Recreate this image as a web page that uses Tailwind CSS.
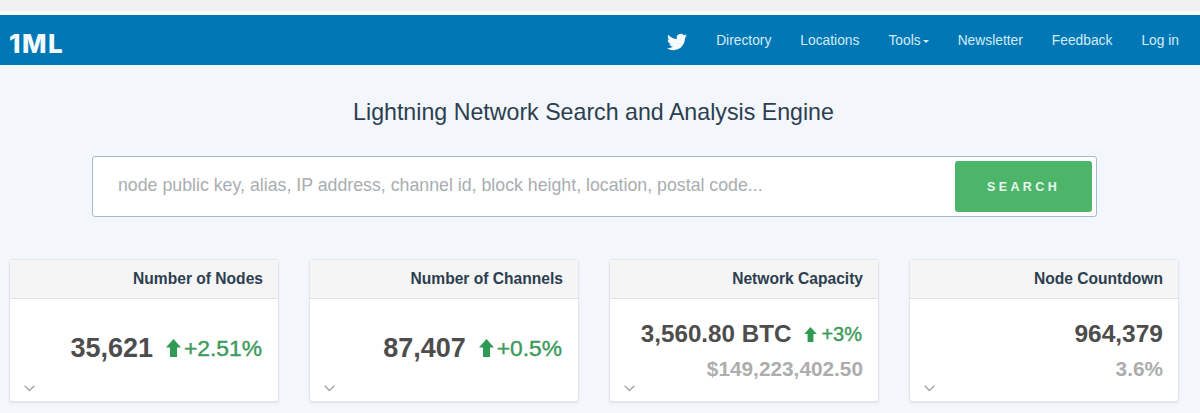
<!DOCTYPE html>
<html lang="en">
  <head>
    <meta charset="UTF-8" />
    <title>1ML - Lightning Network Search and Analysis Engine</title>
    <script src="https://cdn.jsdelivr.net/npm/@tailwindcss/browser@4"></script>
  </head>
  <body class="bg-[#f3f6fa] font-['Liberation_Sans',sans-serif] h-[413px] overflow-hidden">
    <div class="h-[11px] bg-[#f0f1f0]"></div>
    <div class="h-[4px] bg-white"></div>
    <!-- Navbar -->
    <nav class="h-[50px] bg-[#0077b5] flex items-center pl-[9px] pr-[21px] text-[#d4ecf7] text-[13.8px]">
      <span class="mt-[7px] font-['Inter',sans-serif] font-extrabold text-[26px] leading-none text-[#f2fbfe] tracking-[1.5px]">1ML</span>
      <div class="ml-auto pt-[2px] flex items-center">
        <svg class="w-[20px] h-[20px] mt-[1px] mr-[29px]" viewBox="0 0 24 24" fill="#f4fbfe"><path d="M23.95 4.57a10 10 0 0 1-2.82.77 4.96 4.96 0 0 0 2.16-2.72c-.95.55-2 .96-3.12 1.19a4.92 4.92 0 0 0-8.38 4.48C7.69 8.1 4.07 6.13 1.64 3.16a4.82 4.82 0 0 0-.67 2.48c0 1.71.87 3.21 2.19 4.1a4.9 4.9 0 0 1-2.23-.62v.06a4.92 4.92 0 0 0 3.95 4.83 5 5 0 0 1-2.21.08 4.94 4.94 0 0 0 4.6 3.42A9.87 9.87 0 0 1 0 19.54a14 14 0 0 0 7.56 2.21c9.05 0 14-7.5 14-13.98 0-.21 0-.42-.02-.63a9.94 9.94 0 0 0 2.41-2.57z"/></svg>
        <a class="mr-[29px]">Directory</a>
        <a class="mr-[29px]">Locations</a>
        <a class="mr-[29px] flex items-center">Tools<span class="ml-[2px] w-0 h-0 border-x-[3.5px] border-x-transparent border-t-[3.5px] border-t-[#d4ecf7]"></span></a>
        <a class="mr-[29px]">Newsletter</a>
        <a class="mr-[29px]">Feedback</a>
        <a>Log in</a>
      </div>
    </nav>

    <h1 class="mt-[33px] pr-[13px] text-center text-[23.2px] leading-[28px] text-[#2c3e50]">Lightning Network Search and Analysis Engine</h1>

    <!-- Search -->
    <div class="mt-[30px] ml-[92px] w-[1005px] h-[61px] bg-white border border-[#a3bbd0] rounded-[3px] flex items-center justify-between pl-[25px] pr-[4px]">
      <span class="mb-[2px] text-[#a9adb1] text-[17.75px]">node public key, alias, IP address, channel id, block height, location, postal code...</span>
      <button class="w-[137px] h-[51px] pt-[2px] bg-[#4db56a] rounded-[3px] text-[#e8f6ec] text-[12.5px] font-bold tracking-[3.4px]">SEARCH</button>
    </div>

    <!-- Stats -->
    <div class="mt-[42px] grid grid-cols-4 gap-[30px] pl-[9px] pr-[21px]">
      <div class="relative h-[143px] bg-white border border-[#e2e6ea] rounded-[3px] shadow-[0_1px_2px_rgba(0,0,0,0.08)]">
        <div class="h-[39px] bg-[#f5f5f5] border-b border-[#dfe3e8] flex items-center justify-end pr-[15px] text-[15.6px] font-bold text-[#2c3e50]">Number of Nodes</div>
        <div class="h-[102px] flex items-center justify-end pr-[16px] pb-[4px] font-bold text-[#4d4d4d] text-[27px]">
          35,621
          <svg class="w-[15px] h-[18px] ml-[13px] mr-[3px]" viewBox="0 0 15 18" fill="#2f9a54"><path d="M7.5 0 15 8.5h-4V18H4V8.5H0z"/></svg>
          <span class="text-[#3c9a5b] text-[22.8px] font-normal [-webkit-text-stroke:0.4px_#3c9a5b]">+2.51%</span>
        </div>
        <svg class="absolute left-[14px] bottom-[9px] w-[11px] h-[7px]" viewBox="0 0 11 7" fill="none" stroke="#a0a4a8" stroke-width="1.4"><path d="M.7.8 5.5 5.6 10.3.8"/></svg>
      </div>
      <div class="relative h-[143px] bg-white border border-[#e2e6ea] rounded-[3px] shadow-[0_1px_2px_rgba(0,0,0,0.08)]">
        <div class="h-[39px] bg-[#f5f5f5] border-b border-[#dfe3e8] flex items-center justify-end pr-[15px] text-[15.6px] font-bold text-[#2c3e50]">Number of Channels</div>
        <div class="h-[102px] flex items-center justify-end pr-[16px] pb-[4px] font-bold text-[#4d4d4d] text-[27px]">
          87,407
          <svg class="w-[15px] h-[18px] ml-[13px] mr-[3px]" viewBox="0 0 15 18" fill="#2f9a54"><path d="M7.5 0 15 8.5h-4V18H4V8.5H0z"/></svg>
          <span class="text-[#3c9a5b] text-[22.8px] font-normal [-webkit-text-stroke:0.4px_#3c9a5b]">+0.5%</span>
        </div>
        <svg class="absolute left-[14px] bottom-[9px] w-[11px] h-[7px]" viewBox="0 0 11 7" fill="none" stroke="#a0a4a8" stroke-width="1.4"><path d="M.7.8 5.5 5.6 10.3.8"/></svg>
      </div>
      <div class="relative h-[143px] bg-white border border-[#e2e6ea] rounded-[3px] shadow-[0_1px_2px_rgba(0,0,0,0.08)]">
        <div class="h-[39px] bg-[#f5f5f5] border-b border-[#dfe3e8] flex items-center justify-end pr-[15px] text-[15.6px] font-bold text-[#2c3e50]">Network Capacity</div>
        <div class="pt-[19px] pr-[15px] text-right">
          <div class="flex items-center justify-end pr-[1px] font-bold text-[#4d4d4d] text-[24.2px] leading-[32px]">
            3,560.80 BTC
            <svg class="w-[13px] h-[15px] ml-[13px] mr-[4px]" viewBox="0 0 15 18" fill="#2f9a54"><path d="M7.5 0 15 8.5h-4V18H4V8.5H0z"/></svg>
            <span class="text-[#3c9a5b] text-[20px] font-normal [-webkit-text-stroke:0.4px_#3c9a5b]">+3%</span>
          </div>
          <div class="mt-[7px] font-bold text-[#adadad] text-[20.8px] leading-[24px]">$149,223,402.50</div>
        </div>
        <svg class="absolute left-[14px] bottom-[9px] w-[11px] h-[7px]" viewBox="0 0 11 7" fill="none" stroke="#a0a4a8" stroke-width="1.4"><path d="M.7.8 5.5 5.6 10.3.8"/></svg>
      </div>
      <div class="relative h-[143px] bg-white border border-[#e2e6ea] rounded-[3px] shadow-[0_1px_2px_rgba(0,0,0,0.08)]">
        <div class="h-[39px] bg-[#f5f5f5] border-b border-[#dfe3e8] flex items-center justify-end pr-[15px] text-[15.6px] font-bold text-[#2c3e50]">Node Countdown</div>
        <div class="pt-[19px] pr-[15px] text-right">
          <div class="font-bold text-[#4d4d4d] text-[24.5px] leading-[32px]">964,379</div>
          <div class="mt-[7px] font-bold text-[#adadad] text-[20.8px] leading-[24px]">3.6%</div>
        </div>
        <svg class="absolute left-[14px] bottom-[9px] w-[11px] h-[7px]" viewBox="0 0 11 7" fill="none" stroke="#a0a4a8" stroke-width="1.4"><path d="M.7.8 5.5 5.6 10.3.8"/></svg>
      </div>
    </div>
  </body>
</html>
